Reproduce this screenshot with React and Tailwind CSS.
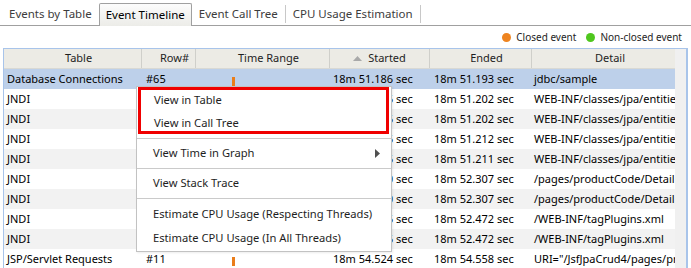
const font = { fontFamily: '"Noto Sans", "DejaVu Sans", sans-serif' };

const rows = [
  { table: 'Database Connections', row: '#65', started: '18m 51.186 sec', ended: '18m 51.193 sec', detail: 'jdbc/sample' },
  { table: 'JNDI', row: '', started: '18m 51.196 sec', ended: '18m 51.202 sec', detail: 'WEB-INF/classes/jpa/entities' },
  { table: 'JNDI', row: '', started: '18m 51.196 sec', ended: '18m 51.202 sec', detail: 'WEB-INF/classes/jpa/entities' },
  { table: 'JNDI', row: '', started: '18m 51.206 sec', ended: '18m 51.212 sec', detail: 'WEB-INF/classes/jpa/entities' },
  { table: 'JNDI', row: '', started: '18m 51.206 sec', ended: '18m 51.211 sec', detail: 'WEB-INF/classes/jpa/entities' },
  { table: 'JNDI', row: '', started: '18m 52.300 sec', ended: '18m 52.307 sec', detail: '/pages/productCode/Detail.xhtml' },
  { table: 'JNDI', row: '', started: '18m 52.300 sec', ended: '18m 52.307 sec', detail: '/pages/productCode/Detail.xhtml' },
  { table: 'JNDI', row: '', started: '18m 52.466 sec', ended: '18m 52.472 sec', detail: '/WEB-INF/tagPlugins.xml' },
  { table: 'JNDI', row: '', started: '18m 52.466 sec', ended: '18m 52.472 sec', detail: '/WEB-INF/tagPlugins.xml' },
  { table: 'JSP/Servlet Requests', row: '#11', started: '18m 54.524 sec', ended: '18m 54.558 sec', detail: 'URI="/JsfJpaCrud4/pages/productCode' },
];

function Tabs() {
  const tabs = ['Events by Table', 'Event Timeline', 'Event Call Tree', 'CPU Usage Estimation'];
  return (
    <div className="flex items-end h-[26px] border-b border-[#a0a0a0] pl-[2px] text-[11.5px]">
      {tabs.map((t, i) =>
        i === 1 ? (
          <div
            key={t}
            className="h-[23px] px-[6px] flex items-center border border-b-0 border-[#a0a0a0] rounded-t-[2px] bg-gradient-to-b from-[#fcfcfc] to-[#ecece8] text-black mb-[-1px] pb-[1px]"
          >
            {t}
          </div>
        ) : (
          <div key={t} className="h-[22px] flex items-center">
            <span className="px-[7px] text-[#3c3c3c]">{t}</span>
            {i !== 0 && <span className="w-px h-[18px] bg-[#c8c8c8]" />}
          </div>
        )
      )}
    </div>
  );
}

function Legend() {
  return (
    <div className="h-[22px] flex items-center justify-end gap-[10px] pr-[9px] text-[10px] text-[#1e1e1e]">
      <span className="flex items-center gap-[5px]">
        <span className="w-[9px] h-[9px] rounded-full bg-[#ee8420]" />
        Closed event
      </span>
      <span className="flex items-center gap-[5px]">
        <span className="w-[9px] h-[9px] rounded-full bg-[#4fc71e]" />
        Non-closed event
      </span>
    </div>
  );
}

const cols = 'grid grid-cols-[138px_54px_134px_100px_102px_145px]';

function Table() {
  return (
    <div className="mx-[3px] border border-r-[2px] border-[#a8c4ea] flex">
      <div className="flex-1 min-w-0">
        <div className={`${cols} h-[20px] bg-[#ecebe5] border-b border-[#d9d9d4] text-[#1e1e1e]`}>
          {['Table', 'Row#', 'Time Range'].map(h => (
            <div key={h} className="border-r border-[#cfcfca] flex items-center justify-center pl-[12px]">{h}</div>
          ))}
          <div className="border-r border-[#cfcfca] flex items-center justify-center gap-[6px]">
            <svg width="9" height="5" viewBox="0 0 9 5"><path d="M0 5 L4.5 0 L9 5 Z" fill="#a9a9a9" /></svg>
            Started
          </div>
          {['Ended', 'Detail'].map(h => (
            <div key={h} className="border-r border-[#cfcfca] flex items-center justify-center pl-[12px]">{h}</div>
          ))}
        </div>
        {rows.map((r, i) => (
          <div
            key={i}
            className={`${cols} h-[20px] items-center whitespace-nowrap overflow-hidden text-black ${
              i === 0 ? 'bg-[#bdd0ea]' : i % 2 === 0 ? 'bg-[#f2f2f2]' : 'bg-white'
            }`}
          >
            <div className="pl-[3px] overflow-hidden">{r.table}</div>
            <div className="pl-[4px] overflow-hidden">{r.row}</div>
            <div className="pl-[36px] flex items-center">
              <span className="w-[3px] h-[9px] bg-[#ea7d1a] mt-[4px]" />
            </div>
            <div className="pl-[3px] overflow-hidden">{r.started}</div>
            <div className="pl-[4px] overflow-hidden">{r.ended}</div>
            <div className="pl-[2px] overflow-hidden">{r.detail}</div>
          </div>
        ))}
      </div>
      <div className="w-[11px] bg-[#f0f0f0]" />
    </div>
  );
}

function ContextMenu() {
  const item = 'h-[24px] flex items-center pl-[16px] pr-[10px] whitespace-nowrap';
  return (
    <div className="absolute left-[136px] top-[86px] w-[256px] bg-white border border-[#c2c2c2] text-[#1e1e1e] text-[11.2px] shadow-[1px_1px_2px_rgba(0,0,0,0.08)]">
      {/* highlighted pair */}
      <div className="border-[3px] border-[#f00000] ml-[1px] mr-[2px]">
        <div className="h-[20px] flex items-center pl-[13px]">View in Table</div>
        <div className="h-[21px] flex items-center pl-[13px] pt-[5px]">View in Call Tree</div>
      </div>
      <div className="h-[4px]" />
      <div className="border-t border-[#cacaca]" />
      <div className={`h-[29px] flex items-center pl-[16px] pr-[11px] justify-between`}>
        <span>View Time in Graph</span>
        <svg width="5" height="9" viewBox="0 0 5 9"><path d="M0 0 L5 4.5 L0 9 Z" fill="#505050" /></svg>
      </div>
      <div className="border-t border-[#cacaca]" />
      <div className="h-[29px] flex items-center pl-[16px]">View Stack Trace</div>
      <div className="border-t border-[#cacaca]" />
      <div className="pt-[3px] pb-[1px]">
        <div className={item}>Estimate CPU Usage (Respecting Threads)</div>
        <div className={item}>Estimate CPU Usage (In All Threads)</div>
      </div>
    </div>
  );
}

export default function App() {
  return (
    <div className="relative w-[691px] h-[268px] overflow-hidden bg-white text-[11px]" style={font}>
      <Tabs />
      <Legend />
      <Table />
      <ContextMenu />
    </div>
  );
}
